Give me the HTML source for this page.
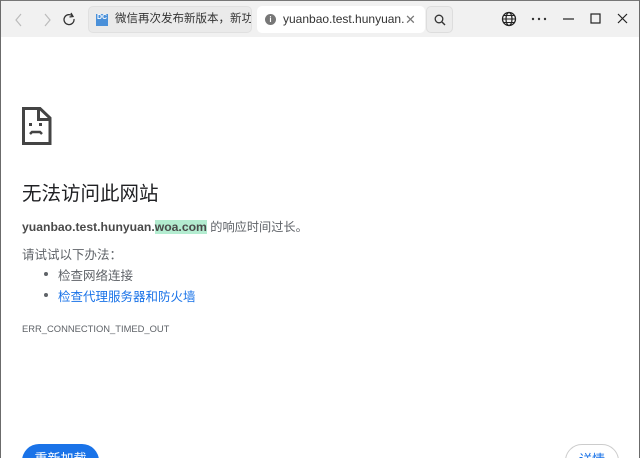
<!DOCTYPE html>
<html><head><meta charset="utf-8"><style>
*{margin:0;padding:0;box-sizing:border-box}
html,body{width:640px;height:458px;overflow:hidden;background:#fff}
#w{position:absolute;left:0;top:0;width:640px;height:458px;overflow:hidden;font-family:"Liberation Sans","Noto Sans CJK SC",sans-serif;border-left:1px solid #6b6b6b;border-right:1px solid #6b6b6b}
.bar{position:absolute;left:-1px;top:0;width:640px;height:37px;background:#f1f1f1;border-top:1px solid #777}
.ic{position:absolute;color:#444;font-size:14px}
.tab1{position:absolute;left:88px;top:5px;width:164px;height:27px;background:#eaeaea;border:1px solid #e0e0e0;border-radius:5px;font-size:11.5px;color:#333;line-height:25px;padding-left:26px;white-space:nowrap;overflow:hidden}
.tab2{position:absolute;left:257px;top:5px;width:168px;height:27px;background:#fff;border-radius:5px;font-size:12px;color:#333;line-height:27px;padding-left:26px;white-space:nowrap}
.srch{position:absolute;left:426px;top:5px;width:27px;height:27px;border:1px solid #ddd;border-radius:5px;background:#ececec}
.c{position:absolute;left:21px}
a{color:#1a73e8;text-decoration:none}
.dot{position:absolute;left:0;width:4px;height:4px;border-radius:50%;background:#5f6368;top:7px}
</style></head><body><div id="w">
<div class="bar">
<svg class="ic" style="left:14px;top:12px" width="10" height="14"><path d="M7 1 L2 7 L7 13" stroke="#bbb" fill="none" stroke-width="1.2"/></svg>
<svg class="ic" style="left:42px;top:12px" width="10" height="14"><path d="M3 1 L8 7 L3 13" stroke="#bbb" fill="none" stroke-width="1.2"/></svg>
<svg class="ic" style="left:62px;top:11px" width="14" height="14"><path d="M10.5 4 A5 5 0 1 0 12 7" stroke="#333" fill="none" stroke-width="1.3"/><path d="M9 1 L11 4.5 L7.5 5" stroke="#333" fill="none" stroke-width="1.3"/></svg>
<div class="tab1"><span style="position:absolute;left:7px;top:7px;width:12px;height:12px;background:#4a90d9;color:#fff;font-size:7px;line-height:8px;font-weight:bold;text-align:center">DC</span>微信再次发布新版本，新功能</div>
<div class="tab2"><span style="position:absolute;left:8px;top:8px;width:11px;height:11px;border-radius:50%;background:#777;color:#fff;font-size:8px;line-height:11px;text-align:center;font-weight:bold">i</span>yuanbao.test.hunyuan.<span style="position:absolute;left:148px;color:#777;font-size:13px">✕</span></div>
<div class="srch"><svg style="position:absolute;left:7px;top:7px" width="12" height="12"><circle cx="5" cy="5" r="3.8" stroke="#333" fill="none" stroke-width="1.3"/><path d="M8 8 L11 11" stroke="#333" stroke-width="1.4"/></svg></div>
<svg class="ic" style="left:501px;top:10px" width="16" height="16"><circle cx="8" cy="8" r="6.5" stroke="#222" fill="none" stroke-width="1.3"/><ellipse cx="8" cy="8" rx="3" ry="6.5" stroke="#222" fill="none" stroke-width="1.2"/><path d="M1.5 8 H14.5 M2.5 4.5 H13.5 M2.5 11.5 H13.5" stroke="#222" stroke-width="1.1"/></svg>
<svg class="ic" style="left:531px;top:16px" width="16" height="4"><circle cx="2" cy="2" r="1.2" fill="#333"/><circle cx="8" cy="2" r="1.2" fill="#333"/><circle cx="14" cy="2" r="1.2" fill="#333"/></svg>
<svg class="ic" style="left:563px;top:17px" width="12" height="2"><path d="M0 1 H11" stroke="#222" stroke-width="1.2"/></svg>
<svg class="ic" style="left:590px;top:12px" width="12" height="12"><rect x="1" y="1" width="9" height="9" stroke="#222" fill="none" stroke-width="1.2"/></svg>
<svg class="ic" style="left:617px;top:12px" width="12" height="12"><path d="M1 1 L10 10 M10 1 L1 10" stroke="#222" stroke-width="1.2"/></svg>
</div>
<svg class="c" style="top:107px" width="30" height="38"><path d="M1.5 1.5 H18 L28 11 V36.5 H1.5 Z" stroke="#444" stroke-width="3" fill="none"/><path d="M16.5 1.5 V12.5 H28" stroke="#444" stroke-width="3" fill="none"/><rect x="7" y="16" width="3" height="3" fill="#444"/><rect x="17" y="16" width="3" height="3" fill="#444"/><path d="M8 27 L10 25 H18 L20 27" stroke="#444" stroke-width="2.5" fill="none"/></svg>
<div class="c" style="top:177px;font-size:19.5px;color:#202124">无法访问此网站</div>
<div class="c" style="top:217px;font-size:12.2px;color:#5f6368"><b style="color:#4a4a4a">yuanbao.test.hunyuan.<span style="background:#b3ecd0">woa.com</span></b> 的响应时间过长。</div>
<div class="c" style="top:244px;font-size:12.5px;color:#5f6368">请试试以下办法：</div>
<div class="c" style="top:265px;left:43px;font-size:12.5px;color:#5f6368"><span class="dot"></span><span style="margin-left:14px">检查网络连接</span></div>
<div class="c" style="top:286px;left:43px;font-size:12.5px;color:#5f6368"><span class="dot"></span><a style="margin-left:14px">检查代理服务器和防火墙</a></div>
<div class="c" style="top:323px;font-size:9.4px;color:#5f6368">ERR_CONNECTION_TIMED_OUT</div>
<div style="position:absolute;left:21px;top:444px;width:77px;height:34px;border-radius:17px;background:#1a73e8;color:#fff;font-size:13px;line-height:30px;text-align:center">重新加载</div>
<div style="position:absolute;left:564px;top:444px;width:54px;height:34px;border-radius:17px;border:1px solid #ccc;color:#1a73e8;font-size:13px;line-height:30px;text-align:center">详情</div>
</div></body></html>
